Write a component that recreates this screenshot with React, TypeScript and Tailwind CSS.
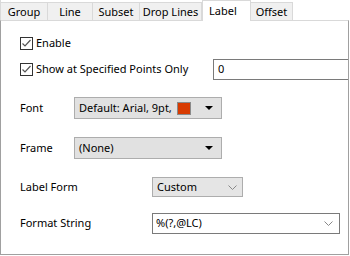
import { ReactNode } from "react";

const font = { fontFamily: '"Noto Sans", "Liberation Sans", sans-serif' };

function Tab({ label, width, active }: { label: string; width: string; active?: boolean }) {
    if (active) {
        return (
            <div className={`${width} h-[21px] bg-white border-x border-t border-[#d9d9d9] -mb-px flex items-start pl-[6px] pt-[2px] relative z-10`}>
                {label}
            </div>
        );
    }
    return (
        <div className={`${width} h-[18px] mt-[2px] bg-[#f0f0f0] border-t border-r border-[#d9d9d9] flex items-center justify-center pt-[1px]`}>
            {label}
        </div>
    );
}

function Checkbox() {
    return (
        <div className="w-[13px] h-[13px] border border-[#333333] bg-white flex items-center justify-center">
            <svg width="11" height="11" viewBox="0 0 11 11">
                <path d="M1.5 5.5 L4 8 L9.5 2" fill="none" stroke="#555555" strokeWidth="1.2" />
            </svg>
        </div>
    );
}

function TriangleArrow() {
    return (
        <svg width="8" height="4" viewBox="0 0 8 4">
            <path d="M0 0 H8 L4 4 Z" fill="#000" />
        </svg>
    );
}

function Chevron() {
    return (
        <svg width="9" height="5" viewBox="0 0 9 5">
            <path d="M0.5 0.5 L4.5 4.5 L8.5 0.5" fill="none" stroke="#888" strokeWidth="1" />
        </svg>
    );
}

function Row({ label, labelWidth, children, className }: { label: string; labelWidth: string; children: ReactNode; className: string }) {
    return (
        <div className={`flex items-center ${className}`}>
            <div className={`shrink-0 ${labelWidth}`}>{label}</div>
            {children}
        </div>
    );
}

export default function App() {
    return (
        <div className="w-[350px] h-[256px] bg-white text-[11px] text-black overflow-hidden" style={font}>
            <div className="flex h-[21px] border-l border-[#d9d9d9]">
                <Tab label="Group" width="w-[47px]" />
                <Tab label="Line" width="w-[45px]" />
                <Tab label="Subset" width="w-[47px]" />
                <Tab label="Drop Lines" width="w-[62px]" />
                <Tab label="Label" width="w-[49px]" active />
                <Tab label="Offset" width="w-[42px]" />
            </div>
            <div className="w-[349px] h-[235px] border border-t-[#d9d9d9] border-x-[#a0a0a0] border-b-[#a0a0a0] flex flex-col pl-[19px] -mt-px">
                <div className="flex items-center gap-[3px] h-[13px] mt-[16px]">
                    <Checkbox />
                    <span>Enable</span>
                </div>
                <div className="flex items-center h-[21px] mt-[9px]">
                    <div className="flex items-center gap-[3px] w-[193px]">
                        <Checkbox />
                        <span>Show at Specified Points Only</span>
                    </div>
                    <div className="flex-1 h-[21px] border border-r-0 border-[#7a7a7a] flex items-center pl-[4px]">0</div>
                </div>
                <Row label="Font" labelWidth="w-[54px]" className="h-[22px] mt-[17px]">
                    <div className="w-[148px] h-[22px] bg-[#e1e1e1] border border-[#adadad] flex items-center pl-[4px] pr-[8px]">
                        <span>Default: Arial, 9pt,</span>
                        <div className="ml-[5px] w-[14px] h-[13px] bg-[#d83b01] border border-[#8a8a8a]" />
                        <div className="ml-auto flex items-center">
                            <TriangleArrow />
                        </div>
                    </div>
                </Row>
                <Row label="Frame" labelWidth="w-[54px]" className="h-[22px] mt-[18px]">
                    <div className="w-[148px] h-[22px] bg-[#e1e1e1] border border-[#adadad] flex items-center pl-[4px] pr-[8px]">
                        <span>(None)</span>
                        <div className="ml-auto flex items-center">
                            <TriangleArrow />
                        </div>
                    </div>
                </Row>
                <Row label="Label Form" labelWidth="w-[132px]" className="h-[20px] mt-[18px]">
                    <div className="w-[91px] h-[20px] bg-[#e5e5e5] border border-[#adadad] flex items-center pl-[4px] pr-[5px]">
                        <span>Custom</span>
                        <div className="ml-auto flex items-center">
                            <Chevron />
                        </div>
                    </div>
                </Row>
                <Row label="Format String" labelWidth="w-[132px]" className="h-[21px] mt-[16px]">
                    <div className="w-[188px] h-[21px] bg-white border border-[#7a7a7a] flex items-center pl-[3px] pr-[6px]">
                        <span>%(?,@LC)</span>
                        <div className="ml-auto flex items-center">
                            <Chevron />
                        </div>
                    </div>
                </Row>
            </div>
        </div>
    );
}
